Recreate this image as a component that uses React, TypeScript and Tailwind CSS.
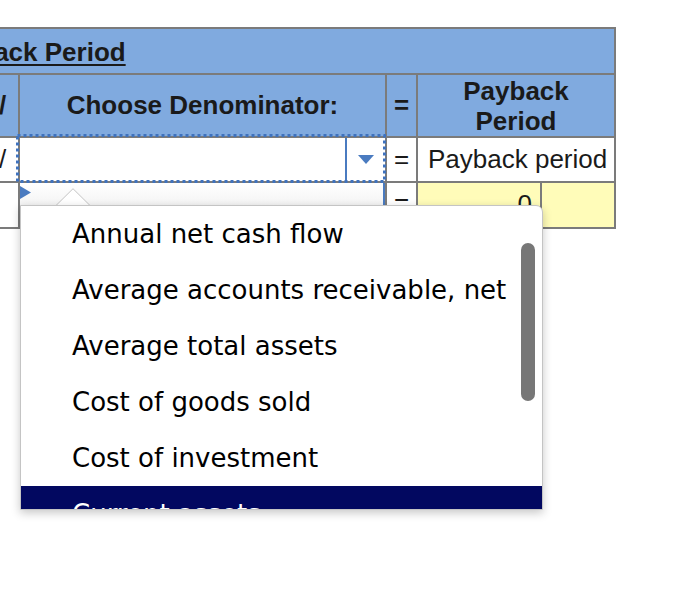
import { useState } from 'react';

const options = [
  'Annual net cash flow',
  'Average accounts receivable, net',
  'Average total assets',
  'Cost of goods sold',
  'Cost of investment',
  'Current assets',
  'Current liabilities',
];

export default function App() {
  const [selected] = useState(5);

  return (
    <div className="relative w-[684px] h-[594px] bg-white overflow-hidden font-['Liberation_Sans',Arial,sans-serif] text-[#1a1a1a]">
      <div className="pt-[27px]">
        {/* Payback period table */}
        <div className="ml-[-200px] w-[816px] grid grid-cols-[183px_31px_365px_29px_196px] grid-rows-[44px_61px_43px_44px] gap-[2px] p-[2px] bg-[#7b7b7b]">
          {/* Title row */}
          <div className="col-span-5 bg-[#80aadf] flex items-center pl-[130px] pt-[2px] text-[26px] font-bold underline underline-offset-[3px] decoration-2">
            Payback Period
          </div>

          {/* Header row */}
          <div className="bg-[#80aadf]" />
          <div className="bg-[#80aadf] flex items-center justify-center text-[26px] font-bold">/</div>
          <div className="bg-[#80aadf] flex items-center justify-center text-[26px] font-bold">Choose Denominator:</div>
          <div className="bg-[#80aadf] flex items-center justify-center text-[26px] font-bold">=</div>
          <div className="bg-[#80aadf] flex flex-col items-center justify-center text-[26px] font-bold leading-[30px]">
            <span>Payback</span>
            <span>Period</span>
          </div>

          {/* Label row */}
          <div className="bg-white" />
          <div className="bg-white flex items-center justify-center text-[26px]">/</div>
          <div className="relative z-10 bg-white flex">
            <div className="flex-1" />
            <div className="w-[40px] border-l-2 border-[#4a7bc0] flex items-center justify-center">
              <svg width="16" height="9" viewBox="0 0 16 9">
                <path d="M0 0 L16 0 L8 9 Z" fill="#4a7bc0" />
              </svg>
            </div>
            {/* focus ring */}
            <svg className="absolute left-[-4px] top-[-4px] pointer-events-none" width="370" height="49" viewBox="0 0 370 49">
              <rect x="1.5" y="1.5" width="367" height="46" fill="none" stroke="#3f72bd" strokeWidth="3" strokeDasharray="3 3" />
            </svg>
          </div>
          <div className="bg-white flex items-center justify-center text-[26px]">=</div>
          <div className="bg-white flex items-center pl-[10px] text-[26px]">Payback period</div>

          {/* Value row */}
          <div className="bg-white" />
          <div className="bg-white" />
          <div className="relative bg-gradient-to-b from-white to-[#e9e9e9] border-r-2 border-[#4a7bc0]">
            <svg className="absolute left-0 top-[3px]" width="11" height="13" viewBox="0 0 11 13">
              <path d="M0 0 L11 6.5 L0 13 Z" fill="#4a7bc0" />
            </svg>
          </div>
          <div className="bg-white flex items-start justify-center pt-[6px] text-[26px] leading-none">=</div>
          <div className="grid grid-cols-[122px_72px] gap-[2px] bg-[#7b7b7b]">
            <div className="bg-[#fffcb9] flex items-start justify-end pr-[8px] pt-[8px] text-[26px] leading-none">0</div>
            <div className="bg-[#fffcb9]" />
          </div>
        </div>
      </div>

      {/* Dropdown list */}
      <div className="absolute z-20 left-[20px] top-[205px] w-[523px] h-[305px]">
        <svg className="absolute left-[36px] top-[-17px]" width="36" height="18" viewBox="0 0 36 18">
          <path d="M0 17.5 L17 0.7 L34 17.5" fill="white" stroke="#c4c4c4" strokeWidth="1" />
        </svg>
        <div className="relative w-full h-full bg-white border border-[#c4c4c4] rounded-tr-[7px] shadow-[0_3px_10px_rgba(0,0,0,0.22)] overflow-hidden font-['DejaVu_Sans',Verdana,sans-serif] text-[26px] text-black">
          {options.map((o, i) => (
            <div
              key={o}
              className={
                i === selected
                  ? 'h-[56px] flex items-center pl-[51px] bg-[#020860] text-white'
                  : 'h-[56px] flex items-center pl-[51px]'
              }
            >
              {o}
            </div>
          ))}
          <div className="absolute left-[500px] top-[37px] w-[14px] h-[158px] rounded-full bg-[#777777]" />
        </div>
      </div>
    </div>
  );
}
